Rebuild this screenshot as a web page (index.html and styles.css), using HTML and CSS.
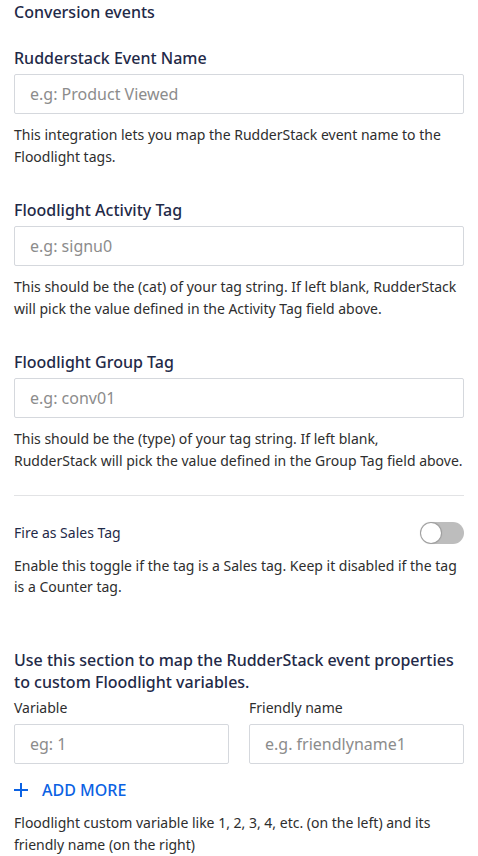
FILE: index.html
```html
<!DOCTYPE html>
<html lang="en">
<head>
<meta charset="utf-8">
<title>Conversion events</title>
<link rel="stylesheet" href="styles.css">
</head>
<body>
<div class="page">
  <h2 class="title">Conversion events</h2>

  <div class="field">
    <label class="label">Rudderstack Event Name</label>
    <input class="input" type="text" placeholder="e.g: Product Viewed">
    <p class="hint">This integration lets you map the RudderStack event name to the Floodlight tags.</p>
  </div>

  <div class="field">
    <label class="label">Floodlight Activity Tag</label>
    <input class="input" type="text" placeholder="e.g: signu0">
    <p class="hint">This should be the (cat) of your tag string. If left blank, RudderStack will pick the value defined in the Activity Tag field above.</p>
  </div>

  <div class="field">
    <label class="label">Floodlight Group Tag</label>
    <input class="input" type="text" placeholder="e.g: conv01">
    <p class="hint">This should be the (type) of your tag string. If left blank, RudderStack will pick the value defined in the Group Tag field above.</p>
  </div>

  <hr class="divider">

  <div class="toggle-row">
    <span class="toggle-label">Fire as Sales Tag</span>
    <span class="toggle"><span class="knob"></span></span>
  </div>
  <p class="hint hint-toggle">Enable this toggle if the tag is a Sales tag. Keep it disabled if the tag is a Counter tag.</p>

  <h3 class="section-title">Use this section to map the RudderStack event properties to custom Floodlight variables.</h3>

  <div class="pair">
    <div class="col">
      <span class="small-label">Variable</span>
      <input class="input" type="text" placeholder="eg: 1">
    </div>
    <div class="col">
      <span class="small-label">Friendly name</span>
      <input class="input" type="text" placeholder="e.g. friendlyname1">
    </div>
  </div>

  <button class="add-more" type="button">
    <svg width="14" height="14" viewBox="0 0 14 14" aria-hidden="true"><path d="M7 0v14M0 7h14" stroke="currentColor" stroke-width="2" fill="none"/></svg>
    <span>ADD MORE</span>
  </button>

  <p class="hint hint-last">Floodlight custom variable like 1, 2, 3, 4, etc. (on the left) and its friendly name (on the right)</p>
</div>
</body>
</html>
```

FILE: styles.css
```css
* { box-sizing: border-box; }

html, body {
  margin: 0;
  padding: 0;
  background: #ffffff;
}

body {
  font-family: "Noto Sans", "Open Sans", sans-serif;
  color: #333333;
}

.page {
  width: 478px;
  padding: 1px 14px 0 14px;
  display: flex;
  flex-direction: column;
}

.title {
  margin: 0;
  font-size: 16px;
  line-height: 22px;
  font-weight: 500;
  color: #1f2a48;
}

.field {
  display: flex;
  flex-direction: column;
  margin-top: 24px;
}

.field + .field {
  margin-top: 31px;
}

.label {
  font-size: 16px;
  line-height: 22px;
  font-weight: 500;
  color: #1f2a48;
  margin-bottom: 5px;
}

.input {
  width: 100%;
  height: 40px;
  border: 1px solid #d5d8dd;
  border-radius: 2px;
  padding: 0 15px;
  font-family: "Noto Sans", "Open Sans", sans-serif;
  font-size: 16px;
  color: #333;
  background: #fff;
  outline: none;
}

.input::placeholder {
  color: #8c8c8c;
}

.hint {
  margin: 10px 0 0 0;
  font-size: 14px;
  line-height: 22px;
  color: #2e2e2e;
}

.divider {
  margin: 23px 0 0 0;
  border: 0;
  border-top: 1px solid #e2e3e5;
  height: 0;
}

.toggle-row {
  margin-top: 26px;
  display: flex;
  align-items: center;
  justify-content: space-between;
  height: 22px;
}

.toggle-label {
  font-size: 14px;
  line-height: 20px;
  color: #1f2a48;
}

.toggle {
  position: relative;
  width: 44px;
  height: 22px;
  border-radius: 11px;
  background: #bdbdbd;
}

.knob {
  position: absolute;
  left: 1px;
  top: 1px;
  width: 20px;
  height: 20px;
  border-radius: 50%;
  background: #fff;
  box-shadow: 0 0 1px 1px rgba(0, 0, 0, 0.18);
}

.hint-toggle {
  margin-top: 11px;
  line-height: 21px;
}

.section-title {
  margin: 52px 0 0 0;
  font-size: 16px;
  line-height: 22px;
  font-weight: 500;
  color: #1f2a48;
}

.pair {
  display: grid;
  grid-template-columns: 1fr 1fr;
  column-gap: 20px;
  margin-top: 5px;
}

.col {
  display: flex;
  flex-direction: column;
}

.small-label {
  font-size: 14px;
  line-height: 20px;
  color: #2e2e2e;
  margin-bottom: 6px;
}

.add-more {
  margin-top: 14px;
  display: flex;
  align-items: center;
  gap: 14px;
  padding: 0;
  border: 0;
  background: none;
  color: #0b62e3;
  font-family: "Noto Sans", "Open Sans", sans-serif;
  font-size: 16px;
  line-height: 24px;
  font-weight: 500;
  cursor: pointer;
  align-self: flex-start;
}

.hint-last {
  margin-top: 10px;
}
```
